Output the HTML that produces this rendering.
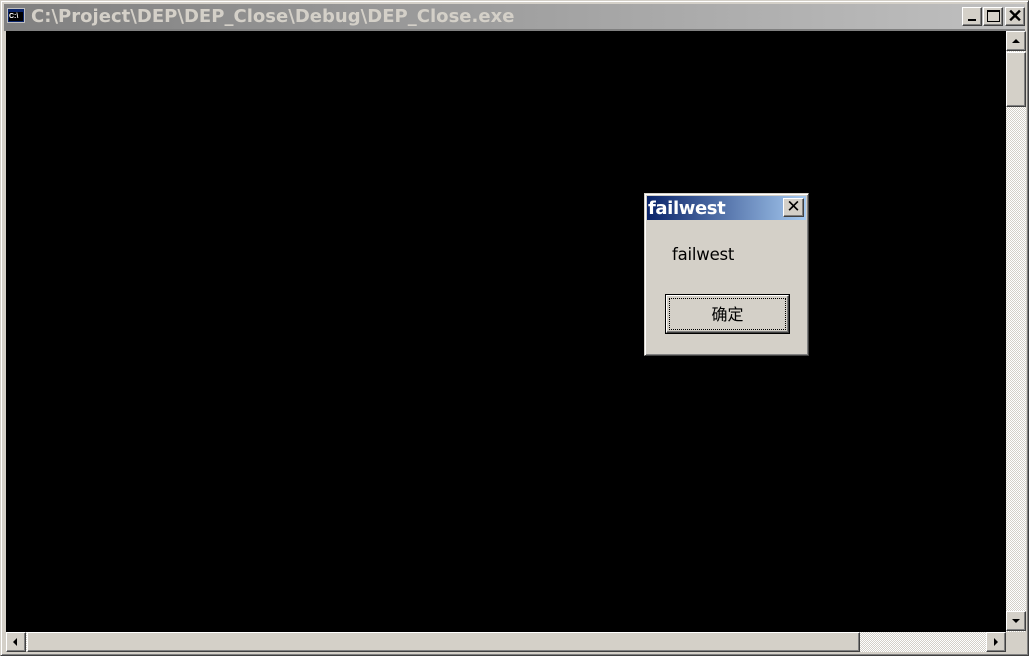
<!DOCTYPE html>
<html><head><meta charset="utf-8"><style>
*{margin:0;padding:0;box-sizing:border-box}
body{width:1029px;height:656px;background:#d4d0c8;position:relative;overflow:hidden;font-family:"Liberation Sans","Noto Sans CJK SC",sans-serif}
.a{position:absolute}
.btn{background:#d4d0c8;border:1px solid;border-color:#fff #404040 #404040 #fff;box-shadow:inset -1px -1px 0 #808080}
.hatch{background-color:#eae7e2;background-image:repeating-conic-gradient(#d4d0c8 0 25%,#fff 0 50%);background-size:2px 2px}
</style></head><body>
<div class="a" style="left:0;top:0;width:1029px;height:656px;border:1px solid;border-color:#d4d0c8 #404040 #404040 #d4d0c8;box-shadow:inset 1px 1px 0 #fff,inset -1px -1px 0 #808080"></div>
<div class="a" style="left:4px;top:4px;width:1021px;height:25px;background:linear-gradient(90deg,#808080,#c0c0c0)"></div>
<div class="a" style="left:7px;top:8px;width:18px;height:15px;background:#0a246a;border:1px solid #c0c0c0"><div class="a" style="left:1px;top:3px;width:14px;height:9px;background:#000;color:#fff;font-size:7px;line-height:9px;font-weight:bold">C:\</div></div>
<div class="a" style="left:31px;top:5px;font-size:18px;font-weight:bold;color:#d4d0c8;line-height:23px;font-family:'DejaVu Sans','Liberation Sans',sans-serif;letter-spacing:0.02px;word-spacing:0">C:\Project\DEP\DEP_Close\Debug\DEP_Close.exe</div>
<div class="a btn" style="left:962px;top:7px;width:20px;height:19px"><div class="a" style="left:5px;top:11px;width:8px;height:2px;background:#000"></div></div>
<div class="a btn" style="left:983px;top:7px;width:20px;height:19px"><div class="a" style="left:3px;top:2px;width:13px;height:12px;border:1px solid #000;border-top-width:2px"></div></div>
<div class="a btn" style="left:1005px;top:7px;width:20px;height:19px;font-size:18px;line-height:16px;text-align:center;font-weight:bold">✕</div>
<div class="a" style="left:4px;top:29px;width:1021px;height:2px;background:#808080"></div>
<div class="a" style="left:6px;top:31px;width:1000px;height:601px;background:#000"></div>
<div class="a hatch" style="left:1006px;top:31px;width:20px;height:601px"></div>
<div class="a btn" style="left:1006px;top:31px;width:20px;height:20px"><div class="a" style="left:5px;top:7px;width:0;height:0;border:4px solid transparent;border-bottom:4px solid #000;border-top:0"></div></div>
<div class="a btn" style="left:1006px;top:52px;width:20px;height:55px"></div>
<div class="a btn" style="left:1006px;top:611px;width:20px;height:20px"><div class="a" style="left:5px;top:7px;width:0;height:0;border:4px solid transparent;border-top:4px solid #000;border-bottom:0"></div></div>
<div class="a hatch" style="left:6px;top:632px;width:1000px;height:20px"></div>
<div class="a btn" style="left:6px;top:632px;width:20px;height:20px"><div class="a" style="left:6px;top:5px;width:0;height:0;border:4px solid transparent;border-right:4px solid #000;border-left:0"></div></div>
<div class="a btn" style="left:27px;top:632px;width:833px;height:20px"></div>
<div class="a btn" style="left:986px;top:632px;width:20px;height:20px"><div class="a" style="left:7px;top:5px;width:0;height:0;border:4px solid transparent;border-left:4px solid #000;border-right:0"></div></div>
<div class="a" style="left:644px;top:193px;width:165px;height:163px;background:#d4d0c8;border:1px solid;border-color:#d4d0c8 #404040 #404040 #d4d0c8;box-shadow:inset 1px 1px 0 #fff,inset -1px -1px 0 #808080"></div>
<div class="a" style="left:647px;top:196px;width:159px;height:24px;background:linear-gradient(90deg,#0a246a,#a6caf0)"></div>
<div class="a" style="left:648px;top:197px;font-size:18px;font-weight:bold;color:#fff;line-height:24px;font-family:'DejaVu Sans','Liberation Sans',sans-serif;letter-spacing:-0.4px">failwest</div>
<div class="a btn" style="left:783px;top:198px;width:21px;height:19px;font-size:17px;line-height:16px;text-align:center">✕</div>
<div class="a" style="left:672px;top:245px;font-size:16.5px;line-height:20px;color:#000;font-family:'DejaVu Sans','Liberation Sans',sans-serif;letter-spacing:-0.2px">failwest</div>
<div class="a" style="left:665px;top:294px;width:125px;height:40px;border:1px solid #000;background:#d4d0c8"><div class="a" style="left:0;top:0;width:123px;height:38px;border:1px solid;border-color:#fff #404040 #404040 #fff;box-shadow:inset -1px -1px 0 #808080"></div><div class="a" style="left:3px;top:3px;width:117px;height:32px;border:1px dotted #000"></div><div class="a" style="left:0;top:8px;width:123px;text-align:center;font-size:16px;line-height:20px;font-family:'Noto Sans CJK SC',sans-serif">确定</div></div>
</body></html>
